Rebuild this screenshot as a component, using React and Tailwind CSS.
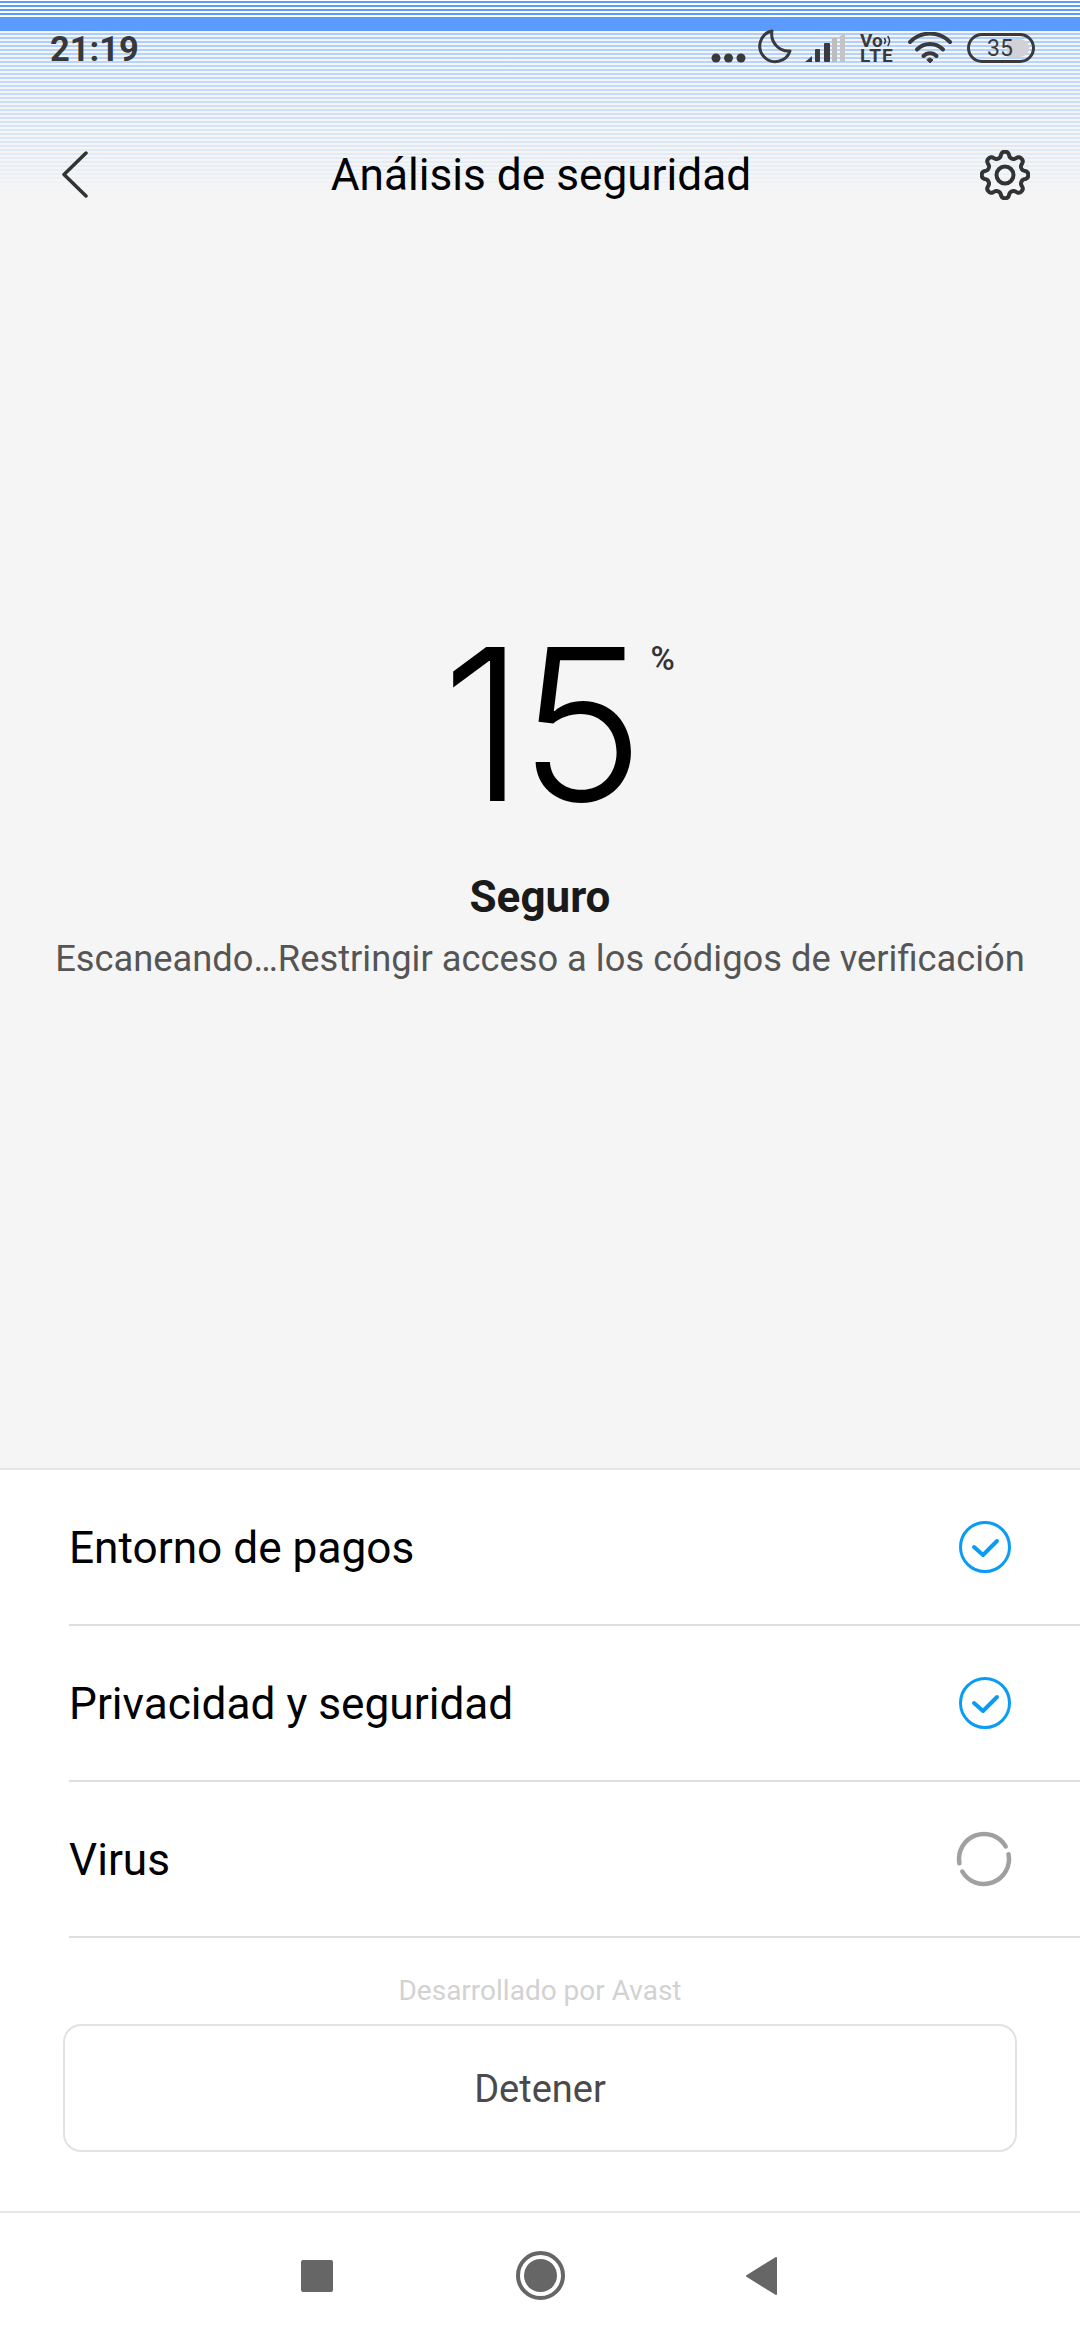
import React from "react";

const gearPath = (() => {
  // eight rounded teeth
  const pts = [];
  const n = 240;
  for (let i = 0; i < n; i++) {
    const t = (i / n) * Math.PI * 2;
    const wave = Math.tanh(1.6 * Math.cos(8 * t)) / Math.tanh(1.6);
    const r = 20.5 + 2.7 * wave;
    pts.push(`${(25 + r * Math.sin(t)).toFixed(2)} ${(25 - r * Math.cos(t)).toFixed(2)}`);
  }
  return "M" + pts.join("L") + "Z";
})();

function CheckIcon() {
  return (
    <svg width="56" height="56" viewBox="0 0 56 56" fill="none">
      <circle cx="28" cy="28" r="24.5" stroke="#0a9cf5" strokeWidth="3" />
      <path d="M17 28l9 8 14-14" stroke="#0a9cf5" strokeWidth="4" strokeLinecap="round" strokeLinejoin="round" />
    </svg>
  );
}

function SpinnerIcon() {
  return (
    <svg width="60" height="60" viewBox="0 0 60 60" className="-mr-[1px]" fill="none" stroke="#a0a0a0" strokeWidth="4.500" strokeLinecap="round">
      <path d="M54.5 25.2A25 25 0 0 1 8.3 42.5" />
      <path d="M5.4 34.3A25 25 0 0 1 51.7 17.5" />
    </svg>
  );
}

function Row({ label, children }) {
  return (
    <div className="ml-[69px] h-[156px] flex items-center justify-between border-b-2 border-[#dedede] pr-[67px]">
      <span className="text-[44.2px] text-black leading-none mt-[3px]">{label}</span>
      {children}
    </div>
  );
}

function StatusIcons() {
  return (
    <div className="flex items-center text-[#3a3a3c]">
      <svg width="38" height="12" viewBox="0 0 38 12" className="mt-[20px]" fill="currentColor">
        <circle cx="6" cy="6" r="4.5" />
        <circle cx="18.5" cy="6" r="4.5" />
        <circle cx="31" cy="6" r="4.5" />
      </svg>
      <svg width="36" height="36" viewBox="0 0 36 36" className="ml-[9px] -mt-[4px]" fill="none" stroke="currentColor" strokeWidth="3">
        <path d="M15 3A15.500 15.500 0 1 0 33 23A17 17 0 0 1 15 3Z" strokeLinejoin="round" />
      </svg>
      <svg width="42" height="30" viewBox="0 0 42 30" className="ml-[11px]" fill="currentColor">
        <path d="M1 29l7-6v6z" />
        <rect x="11" y="16" width="5" height="13" rx="1" />
        <rect x="20" y="10" width="6" height="19" rx="1" />
        <rect x="28" y="5" width="5" height="24" fill="#bdbdbd" />
        <path d="M36 3l5-2v28h-5z" fill="#c4c4c4" />
      </svg>
      <div className="ml-[14px] w-[34px] flex flex-col items-start font-['Roboto',sans-serif] font-bold leading-none">
        <div className="flex items-center h-[15px]">
          <span className="text-[19px] leading-[15px]">Vo</span>
          <svg width="9" height="12" viewBox="0 0 9 12" fill="none" stroke="currentColor" strokeWidth="1.500" strokeLinecap="round">
            <path d="M1.500 3.500a4 4 0 0 1 0 5" />
            <path d="M5 1.500a8 8 0 0 1 0 9" />
          </svg>
        </div>
        <span className="h-[15px] text-[19px] leading-[15px] tracking-[1px]">LTE</span>
      </div>
      <svg width="44" height="32" viewBox="0 0 44 32" className="ml-[14px]" fill="none" stroke="currentColor" strokeWidth="4" strokeLinecap="round">
        <path d="M2 10a28 28 0 0 1 40 0" />
        <path d="M9 17.500a18 18 0 0 1 26 0" />
        <path d="M15.500 24a9 9 0 0 1 13 0" />
        <path d="M19 28l3 3 3-3-3-2z" fill="currentColor" strokeWidth="1" />
      </svg>
      <div className="relative ml-[15px] h-[30px] w-[68px] rounded-full border-[3px] border-[#3a3a3c] flex items-center justify-center overflow-hidden font-['Roboto',sans-serif]">
        <div className="absolute right-[3px] top-[3px] bottom-[3px] w-[22px] rounded-r-full bg-[#d2d2d4]" />
        <span className="relative text-[23px] leading-none -ml-[2px]">35</span>
      </div>
    </div>
  );
}

export default function App() {
  return (
    <div className="h-[2340px] w-[1080px] flex flex-col bg-[#f5f5f5] font-['Roboto',sans-serif] overflow-hidden">
      {/* scan lines at the top */}
      <div className="h-[19px] bg-[repeating-linear-gradient(to_bottom,#ffffff_0,#ffffff_1px,#5b9bff_1px,#5b9bff_3px,#ffffff_3px,#ffffff_4px)]" />
      <div className="h-[12px] bg-[#5b9bff]" />
      <div className="h-[165px] bg-no-repeat bg-[repeating-linear-gradient(to_bottom,#f5f5f5_0,#f5f5f5_2px,transparent_2px,transparent_4px),linear-gradient(to_bottom,#a8cdff,#f5f5f5_164px)]">
        <div className="h-[34px] pl-[50px] pr-[45px] flex items-center justify-between">
          <span className="text-[34.500px] font-bold text-[#37383a] leading-none mt-[3px]">21:19</span>
          <StatusIcons />
        </div>
        <div className="mt-[85px] h-[46px] pl-[62px] pr-[50px] grid grid-cols-[1fr_auto_1fr] items-center">
          <svg width="28" height="48" viewBox="0 0 28 48" fill="none" stroke="#333" strokeWidth="3.500" strokeLinecap="round" strokeLinejoin="round">
            <path d="M24 2L2 23.500 24 45" />
          </svg>
          <h1 className="-ml-[10px] text-[44.2px] text-black font-normal leading-none">Análisis de seguridad</h1>
          <svg width="50" height="50" viewBox="0 0 50 50" className="justify-self-end" fill="none" stroke="#333" strokeWidth="4">
            <path d={gearPath} strokeLinejoin="round" />
            <circle cx="25" cy="25" r="8.500" />
          </svg>
        </div>
      </div>

      <div className="flex-1 flex flex-col items-center">
        <div className="relative mt-[428px] h-[200px] flex items-center font-['Inter',sans-serif] font-light tracking-[-6px] text-[212px] leading-none text-black">
          15
          <span className="absolute left-full top-[18px] ml-[12px] tracking-normal text-[33px] font-medium font-['Roboto',sans-serif] text-[#333]">%</span>
        </div>
        <div className="mt-[51px] text-[44px] font-bold text-[#1a1a1a] leading-none">Seguro</div>
        <div className="mt-[22px] text-[36.300px] text-[#555] leading-none">Escaneando…Restringir acceso a los códigos de verificación</div>
      </div>

      <div className="h-[872px] bg-white border-t-2 border-[#e6e6e6] flex flex-col">
        <Row label="Entorno de pagos"><CheckIcon /></Row>
        <Row label="Privacidad y seguridad"><CheckIcon /></Row>
        <Row label="Virus"><SpinnerIcon /></Row>
        <div className="mt-[37px] text-center text-[28px] leading-[32px] text-[#d2d2d2]">Desarrollado por Avast</div>
        <button className="mx-[63px] mt-[17px] h-[128px] rounded-[18px] border-2 border-[#e2e2e2] text-[38px] text-[#4a4a4a] pt-[2px]">Detener</button>
        <div className="mt-[59px] flex-1 border-t-2 border-[#e6e6e6] flex items-center justify-center pb-[2px]">
          <div className="w-[32px] h-[32px] rounded-[2px] bg-[#666] -ml-[2px]" />
          <div className="ml-[183px] w-[49px] h-[49px] rounded-full border-[4px] border-[#666] p-[4px]">
            <div className="w-full h-full rounded-full bg-[#666]" />
          </div>
          <svg width="32" height="38" viewBox="0 0 32 38" className="ml-[180px]" fill="#666" stroke="#666" strokeWidth="2" strokeLinejoin="round">
            <path d="M2 19L31 1v36z" />
          </svg>
        </div>
      </div>
    </div>
  );
}
